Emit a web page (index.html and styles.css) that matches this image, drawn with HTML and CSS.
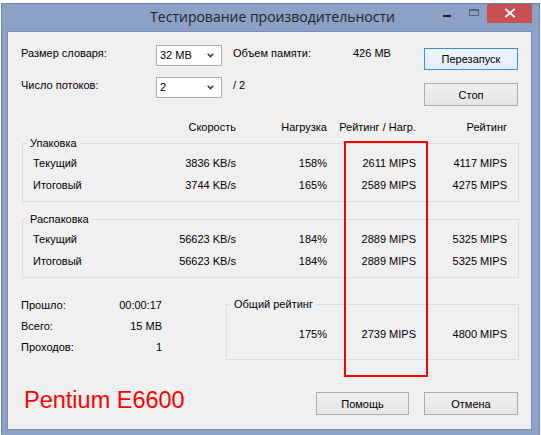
FILE: index.html
```html
<!DOCTYPE html>
<html lang="ru">
<head>
<meta charset="utf-8">
<title>Тестирование производительности</title>
<link rel="stylesheet" href="styles.css">
</head>
<body>
<div class="desk">
  <div class="window">
    <div class="titlebar">
      <div class="title">Тестирование производительности</div>
      <div class="caption-btns">
        <span class="cb cb-min"><svg width="27" height="19" viewBox="0 0 27 19"><rect x="9" y="11" width="8" height="2" fill="#1c1c1c"/></svg></span>
        <span class="cb cb-max"><svg width="26" height="19" viewBox="0 0 26 19"><rect x="8.5" y="5.5" width="9" height="6" fill="none" stroke="#52617e" stroke-width="1"/><rect x="8" y="5" width="10" height="2" fill="#52617e"/></svg></span>
        <span class="cb cb-close"><svg width="45" height="19" viewBox="0 0 45 19"><path d="M19 5.5 L27 12.5 M27 5.5 L19 12.5" stroke="#fff" stroke-width="1.8" stroke-linecap="square"/></svg></span>
      </div>
    </div>
    <div class="client">
      <div class="top">
        <div class="params">
          <span class="lbl">Размер словаря:</span>
          <div class="combo"><span class="combo-text">32 MB</span><svg class="chev" width="7" height="5" viewBox="0 0 7 5"><polyline points="0.7,0.8 3.5,3.6 6.3,0.8" fill="none" stroke="#3a3a3a" stroke-width="1.5"/></svg></div>
          <span class="lbl lbl2">Объем памяти:</span>
          <span class="lbl">426 MB</span>
          <span class="lbl">Число потоков:</span>
          <div class="combo"><span class="combo-text">2</span><svg class="chev" width="7" height="5" viewBox="0 0 7 5"><polyline points="0.7,0.8 3.5,3.6 6.3,0.8" fill="none" stroke="#3a3a3a" stroke-width="1.5"/></svg></div>
          <span class="lbl lbl2">/ 2</span>
          <span class="lbl"></span>
        </div>
        <div class="side-btns">
          <button class="btn btn-default btn-restart">Перезапуск</button>
          <button class="btn btn-stop">Стоп</button>
        </div>
      </div>

      <div class="cols head">
        <span></span>
        <span>Скорость</span>
        <span>Нагрузка</span>
        <span>Рейтинг / Нагр.</span>
        <span>Рейтинг</span>
      </div>

      <fieldset class="grp grp-wide">
        <legend>Упаковка</legend>
        <div class="cols rows">
          <span>Текущий</span><span>3836 KB/s</span><span>158%</span><span>2611 MIPS</span><span>4117 MIPS</span>
          <span>Итоговый</span><span>3744 KB/s</span><span>165%</span><span>2589 MIPS</span><span>4275 MIPS</span>
        </div>
      </fieldset>

      <fieldset class="grp grp-wide grp-second">
        <legend>Распаковка</legend>
        <div class="cols rows">
          <span>Текущий</span><span>56623 KB/s</span><span>184%</span><span>2889 MIPS</span><span>5325 MIPS</span>
          <span>Итоговый</span><span>56623 KB/s</span><span>184%</span><span>2889 MIPS</span><span>5325 MIPS</span>
        </div>
      </fieldset>

      <div class="bottom">
        <div class="stats">
          <span>Прошло:</span><span class="r">00:00:17</span>
          <span>Всего:</span><span class="r">15 MB</span>
          <span>Проходов:</span><span class="r">1</span>
        </div>
        <fieldset class="grp grp-total">
          <legend>Общий рейтинг</legend>
          <div class="total-cols">
            <span>175%</span><span>2739 MIPS</span><span>4800 MIPS</span>
          </div>
        </fieldset>
      </div>

      <div class="footer">
        <span class="cpu">Pentium E6600</span>
        <div class="footer-btns">
          <button class="btn btn-help">Помощь</button>
          <button class="btn btn-cancel">Отмена</button>
        </div>
      </div>

      <div class="highlight"></div>
    </div>
  </div>
</div>
</body>
</html>
```

FILE: styles.css
```css
html, body {
  margin: 0;
  padding: 0;
  background: #ffffff;
}

.desk {
  width: 541px;
  height: 435px;
  overflow: hidden;
  padding: 3px 0 0 1px;
  box-sizing: border-box;
}

.window {
  width: 539px;
  height: 440px;
  box-sizing: border-box;
  background: #8ba1c5;
  border: 1px solid #6f84a8;
  padding: 0 8px 0 6px;
}

.titlebar {
  display: grid;
  grid-template-columns: 1fr;
  height: 28px;
  margin-right: -8px;
}

.title {
  grid-area: 1 / 1;
  text-align: center;
  font: 14px "Open Sans", "Noto Sans", sans-serif;
  line-height: 25px;
  color: #222222;
  padding-right: 2px;
}

.caption-btns {
  grid-area: 1 / 1;
  justify-self: end;
  align-self: start;
  display: flex;
  margin-right: 7px;
}

.cb {
  display: block;
  flex: none;
  height: 19px;
}

.cb-min { width: 27px; }
.cb-max { width: 26px; }
.cb-close { width: 45px; background: #c75050; }

.cb svg { display: block; }

.client {
  position: relative;
  width: 523px;
  height: 397px;
  box-sizing: border-box;
  background: #f0f0f0;
  box-shadow: 0 0 0 1px #7a8eb2;
  padding-top: 13px;
  font-family: "Liberation Sans", Arial, sans-serif;
  font-size: 11px;
  color: #000000;
}

/* top parameters */
.top {
  display: flex;
  padding-left: 13px;
  height: 61px;
}

.params {
  display: grid;
  grid-template-columns: 135px 66px 131px 71px;
  grid-template-rows: 21px 21px;
  row-gap: 11px;
}

.lbl {
  align-self: start;
  line-height: 17px;
  white-space: nowrap;
}

.lbl2 {
  padding-left: 11px;
}

.combo {
  display: flex;
  align-items: center;
  justify-content: space-between;
  box-sizing: border-box;
  height: 21px;
  background: #ffffff;
  border: 1px solid #acacac;
  padding: 0 7px 0 3px;
}

.combo-text {
  line-height: 19px;
}

.chev { display: block; }

.side-btns {
  display: flex;
  flex-direction: column;
  gap: 13px;
  padding-top: 3px;
}

.btn {
  display: block;
  box-sizing: border-box;
  width: 94px;
  height: 23px;
  margin: 0;
  padding: 0;
  font-family: "Liberation Sans", Arial, sans-serif;
  font-size: 11px;
  color: #000000;
  border: 1px solid #acacac;
  background: linear-gradient(#f0f0f0, #e5e5e5);
  border-radius: 0;
}

.btn-restart { height: 22px; }

.btn-default {
  border-color: #3c8ee6;
  background: linear-gradient(#eef5fc, #e3eefa);
}

/* table columns */
.cols {
  display: grid;
  grid-template-columns: 123px 80px 91px 89px 91px;
  white-space: nowrap;
}

.cols > span:not(:nth-child(5n+1)) {
  text-align: right;
}

.head {
  margin: 14px 0 0 25px;
  line-height: 14px;
}

.grp {
  margin: 0;
  border: 1px solid #dcdcdc;
  min-width: 0;
}

.grp legend {
  padding: 0 3px;
  margin-left: 4px;
  line-height: 13px;
}

.grp-wide {
  margin: 3px 12px 0 14px;
  padding: 2px 11px 5px 0;
}

.grp-second {
  margin-top: 11px;
}

.rows {
  margin-left: 10px;
  grid-auto-rows: 22px;
  line-height: 22px;
}

/* bottom area */
.bottom {
  display: flex;
  align-items: flex-start;
  margin-top: 17px;
  padding-left: 13px;
}

.stats {
  display: grid;
  grid-template-columns: 80px 61px;
  line-height: 21px;
  white-space: nowrap;
}

.stats .r { text-align: right; }

.grp-total {
  width: 293px;
  box-sizing: border-box;
  margin: 3px 0 0 64px;
  padding: 12px 11px 14px 0;
}

.total-cols {
  display: grid;
  grid-template-columns: 100px 89px 91px;
  line-height: 22px;
  white-space: nowrap;
  text-align: right;
}

.footer {
  display: flex;
  align-items: flex-start;
  margin-top: 32px;
  padding: 0 13px 0 16px;
}

.cpu {
  font-family: "Liberation Sans", Arial, sans-serif;
  font-size: 23.5px;
  line-height: 17px;
  color: #ff0000;
  white-space: nowrap;
}

.footer-btns {
  display: flex;
  gap: 15px;
  margin-left: auto;
}

.btn-help { width: 93px; }

.highlight {
  position: absolute;
  left: 336px;
  top: 109px;
  width: 84px;
  height: 236px;
  box-sizing: border-box;
  border: 2px solid #ff0000;
  pointer-events: none;
}
```
